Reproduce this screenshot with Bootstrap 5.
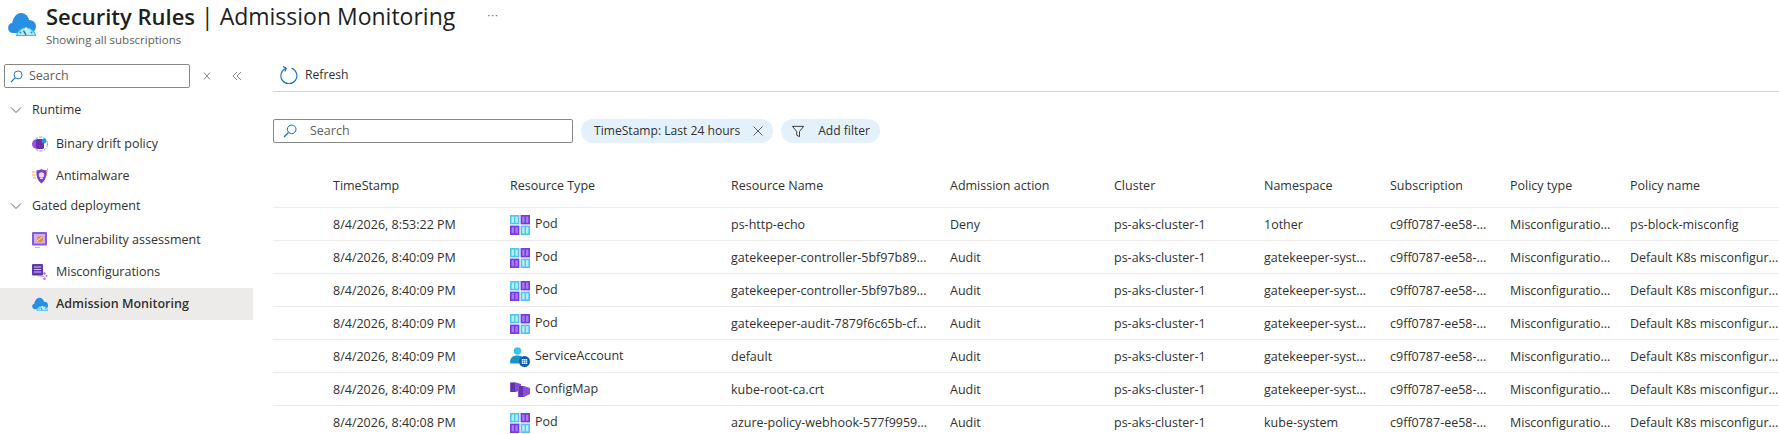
<!DOCTYPE html>
<html lang="en">
<head>
    <meta charset="UTF-8">
    <meta name="viewport" content="width=device-width, initial-scale=1.0">
    <title>Security Rules | Admission Monitoring</title>
    <link href="https://cdn.jsdelivr.net/npm/bootstrap@5.3.3/dist/css/bootstrap.min.css" rel="stylesheet">
    <style>
        body { font-family: "Open Sans", "Liberation Sans", sans-serif; font-size: 12.5px; color: #323130; background: #fff; overflow: hidden; height: 434px; }
        .page-head { height: 55px; padding-left: 8px; }
        .head-text { margin-left: 10px; }
        .page-title { font-size: 23px; line-height: 32px; margin: 0; font-weight: 400; color: #201f1e; white-space: nowrap; }
        .page-title strong { font-weight: 600; font-size: 22px; }
        .page-sub { font-size: 11.5px; line-height: 16px; color: #605e5c; }
        .head-more { margin-left: 32px; line-height: 30px; color: #605e5c; letter-spacing: 1px; font-size: 11px; }
        .logo-mark { margin-top: 12px; }
        .side-pane { width: 253px; flex: none; padding-top: 9px; }
        .side-tools { padding: 0 0 8px 4px; height: 32px; }
        .box-search { border: 1px solid #8a8886; border-radius: 2px; height: 24px; display: flex; align-items: center; background: #fff; }
        .box-search input { border: 0; outline: 0; padding: 0; background: transparent; font-size: 12.5px; width: 100%; color: #323130; }
        .box-search input::placeholder { color: #605e5c; opacity: 1; }
        .side-search { width: 186px; padding-left: 5px; gap: 6px; }
        .tool-x { margin-left: 12px; width: 10px; }
        .tool-back { margin-left: 20px; width: 10px; }
        .group-head { height: 28px; margin-bottom: 4px; padding-left: 10px; gap: 10px; }
        .side-link { height: 32px; padding-left: 32px; gap: 8px; color: #323130; text-decoration: none; }
        .side-link.is-active { background: #edebe9; font-weight: 600; }
        .main-pane { padding-left: 20px; min-width: 0; }
        .tool-bar { height: 37px; border-bottom: 1px solid #d6d4d2; padding: 5px 0 0 7px; gap: 7px; font-size: 12.2px; }
        .refresh-icon { margin-top: -2px; }
        .filter-row { margin-top: 27px; height: 24px; gap: 8px; }
        .filter-search { width: 300px; padding-left: 9px; gap: 13px; }
        .filter-search input { padding-top: 1px; }
        .filter-chip { height: 24px; border-radius: 12px; background: #e5f1fa; color: #323130; white-space: nowrap; padding: 0 10px 0 13px; font-size: 12.1px; }
        .chip-time { width: 192px; justify-content: space-between; }
        .chip-add { width: 99px; padding-left: 11px; gap: 14px; }
        .grid-table { table-layout: fixed; width: 1506px; margin: 17px 0 0; font-size: 12.5px; border-collapse: collapse; }
        .grid-table th, .grid-table td { padding: 3px 0 0; border-bottom: 1px solid #edebe9; white-space: nowrap; overflow: hidden; color: #323130; vertical-align: middle; box-shadow: none; }
        .grid-table th { height: 47px; font-weight: 500; padding-top: 6px; }
        .grid-table td { height: 33px; }
        .type-cell { gap: 5px; margin-top: -1px; }
    </style>
</head>
<body>
    <svg width="0" height="0" class="position-absolute">
        <defs>
            <symbol id="pod" viewBox="0 0 20 20">
                <rect x="0" y="0" width="9.4" height="9.4" fill="#50c7e8"/><rect x="10.6" y="0" width="9.4" height="9.4" fill="#773adc"/>
                <rect x="0" y="10.6" width="9.4" height="9.4" fill="#773adc"/><rect x="10.6" y="10.6" width="9.4" height="9.4" fill="#50c7e8"/>
                <g fill="#b9ecf7"><rect x="1.6" y="1.6" width="2.4" height="6.2"/><rect x="5.4" y="1.6" width="2.4" height="6.2"/><rect x="12.2" y="12.2" width="2.4" height="6.2"/><rect x="16" y="12.2" width="2.4" height="6.2"/></g>
                <g fill="#a67af4"><rect x="12.2" y="1.6" width="2.4" height="6.2"/><rect x="16" y="1.6" width="2.4" height="6.2"/><rect x="1.6" y="12.2" width="2.4" height="6.2"/><rect x="5.4" y="12.2" width="2.4" height="6.2"/></g>
            </symbol>
            <symbol id="account" viewBox="0 0 20 20">
                <circle cx="7.5" cy="4" r="3.800" fill="#3cc4e6"/>
                <path d="M0 15.500c0-4.500 2.600-7 7.500-7 2.600 0 4.600.7 5.800 2-2.400.6-4 2.600-4 5 0 .3 0 .6.1.9H1.200C.4 16.400 0 16.300 0 15.500z" fill="#1b93c7"/>
                <circle cx="14.500" cy="14.500" r="5.500" fill="#0a5fa8"/>
                <path d="M11.800 12.100h5.400v4.800h-5.400z" fill="#fff"/>
                <path d="M11.800 13.700h5.400M11.800 15.300h5.400M13.600 12.100v4.800M15.400 12.100v4.800" stroke="#0a5fa8" stroke-width=".5"/>
            </symbol>
            <symbol id="configmap" viewBox="0 0 20 20">
                <path d="M0 2.500h6l5 1.500v6l-5 2H0z" fill="#8150cf"/>
                <path d="M8 6h6l6 2v6l-6 3H8z" fill="#8a4fd8"/>
                <path d="M2 2.500v9.500M4 2.500v9.500M10 6v11M12 6v11" stroke="#3f1d80" stroke-width="1"/>
            </symbol>
            <symbol id="lens" viewBox="0 0 14 14">
                <circle cx="8.700" cy="5.300" r="4.300" fill="none" stroke="#0f6cbd" stroke-width="1"/>
                <path d="M5.500 8.500 1 13" stroke="#0f6cbd" stroke-width="1.200" fill="none"/>
            </symbol>
            <symbol id="cloud" viewBox="0 0 28 24">
                <path d="M5 21a5 5 0 0 1-.8-9.900C5 5.500 8.500 1 13 1c4.300 0 7.200 3 8 7a6.500 6.500 0 0 1 1 13z" fill="#2a8fe3"/>
                <path d="M8.500 23.500a9.700 9.700 0 0 1 19 0z" fill="#b6ecf7" stroke="#2fc0de" stroke-width="1.200"/>
                <path d="M18 23l-2.500-4.500" stroke="#33658f" stroke-width="1.400"/>
                <circle cx="12.500" cy="20.500" r="1" fill="#2a8fe3"/><circle cx="18" cy="16.500" r="1" fill="#fff"/><circle cx="23.500" cy="20.500" r="1" fill="#2a8fe3"/>
            </symbol>
        </defs>
    </svg>

    <header class="page-head d-flex align-items-start">
        <svg class="logo-mark" width="28" height="24"><use href="#cloud"/></svg>
        <div class="head-text">
            <h1 class="page-title"><strong>Security Rules</strong> | Admission Monitoring</h1>
            <div class="page-sub">Showing all subscriptions</div>
        </div>
        <div class="head-more">···</div>
    </header>

    <div class="d-flex">
        <nav class="side-pane">
            <div class="side-tools d-flex align-items-center">
                <div class="box-search side-search">
                    <svg width="13" height="13" class="flex-shrink-0"><use href="#lens"/></svg>
                    <input type="text" placeholder="Search" aria-label="Search">
                </div>
                <svg class="tool-x" width="10" height="10" viewBox="0 0 10 10"><path d="M2 1.500l6 7M8 1.500l-6 7" stroke="#8a8886" fill="none"/></svg>
                <svg class="tool-back" width="10" height="10" viewBox="0 0 10 10"><path d="M5 1 1 5l4 4M9 1 5 5l4 4" stroke="#8a8886" fill="none"/></svg>
            </div>

            <div class="group-head d-flex align-items-center">
                <svg width="12" height="12" viewBox="0 0 12 12"><path d="M1 3.500l5 5 5-5" stroke="#605e5c" fill="none"/></svg>
                <span>Runtime</span>
            </div>
            <a class="side-link d-flex align-items-center" href="#">
                <svg width="16" height="16" viewBox="0 0 16 16">
                    <circle cx="8.500" cy="8" r="7" fill="none" stroke="#5aa7e6" stroke-width="1" stroke-dasharray="3 1.500"/>
                    <ellipse cx="4" cy="8" rx="4" ry="4.500" fill="#9a52dc"/><rect x="4" y="3" width="8" height="10" rx="1.500" fill="#6b2fb5"/><circle cx="12" cy="5" r="2.400" fill="#2a8fe3"/>
                </svg>
                <span>Binary drift policy</span>
            </a>
            <a class="side-link d-flex align-items-center" href="#">
                <svg width="16" height="16" viewBox="0 0 16 16">
                    <path d="M0 4h3.500M0 7h3.500M1 10h3.500" stroke="#f2a93b" stroke-width="1"/>
                    <path d="M15.500 .5l-1.500 8" stroke="#f2a93b" stroke-width="1.200"/>
                    <path d="M9.500 1c1.800 1.200 3.200 1.300 5 1.300 0 6-1 10.500-5 13.200-4-2.700-5.500-7.200-5-13.200 2 0 3.300-.1 5-1.300z" fill="#7b3fc9"/>
                    <circle cx="9.500" cy="7" r="2.700" fill="#e8dcfb"/><path d="M8 10.500h3" stroke="#e8dcfb"/>
                </svg>
                <span>Antimalware</span>
            </a>

            <div class="group-head d-flex align-items-center">
                <svg width="12" height="12" viewBox="0 0 12 12"><path d="M1 3.500l5 5 5-5" stroke="#605e5c" fill="none"/></svg>
                <span>Gated deployment</span>
            </div>
            <a class="side-link d-flex align-items-center" href="#">
                <svg width="16" height="16" viewBox="0 0 16 16">
                    <rect x="0" y="0" width="15" height="13.500" rx="1" fill="#8a5ad6"/><rect x="2" y="2" width="11" height="9.500" fill="#c9b3ee"/>
                    <circle cx="8" cy="7" r="3" fill="#f08a24"/><path d="M3 15.500h5" stroke="#c9b3ee"/><path d="M5 9l5-4" stroke="#fff" stroke-width=".8"/>
                </svg>
                <span>Vulnerability assessment</span>
            </a>
            <a class="side-link d-flex align-items-center" href="#">
                <svg width="16" height="16" viewBox="0 0 16 16">
                    <rect x="0" y="0" width="11" height="11.500" rx="1" fill="#5c3aa8"/><path d="M2 3h7M2 5.500h7M2 8h7" stroke="#cfc3ee" stroke-width="1"/>
                    <circle cx="12.500" cy="9.500" r="1.300" fill="#a970e8"/><circle cx="14.500" cy="12" r="1" fill="#a970e8"/><circle cx="12.500" cy="14.800" r="1.200" fill="#a970e8"/>
                    <path d="M5 11.500l7 1" stroke="#a970e8" stroke-width=".8"/>
                </svg>
                <span>Misconfigurations</span>
            </a>
            <a class="side-link is-active d-flex align-items-center" href="#">
                <svg width="16" height="14"><use href="#cloud"/></svg>
                <span>Admission Monitoring</span>
            </a>
        </nav>

        <main class="main-pane flex-grow-1">
            <div class="tool-bar d-flex align-items-center">
                <svg class="refresh-icon" width="18" height="19" viewBox="0 0 18 19"><path d="M6 3.300A8 8 0 1 0 11.500 3.200" fill="none" stroke="#0f6cbd" stroke-width="1.100"/><path d="M3 1.500 6.300 3.300 4.800 6.500" fill="none" stroke="#0f6cbd" stroke-width="1.100"/></svg>
                <span>Refresh</span>
            </div>

            <div class="filter-row d-flex">
                <div class="box-search filter-search">
                    <svg width="14" height="14" class="flex-shrink-0"><use href="#lens"/></svg>
                    <input type="text" placeholder="Search" aria-label="Search">
                </div>
                <div class="filter-chip chip-time d-flex align-items-center">
                    <span>TimeStamp: Last 24 hours</span>
                    <svg width="10" height="10" viewBox="0 0 10 10"><path d="M.5.500l9 9M9.500.500l-9 9" stroke="#605e5c" fill="none"/></svg>
                </div>
                <div class="filter-chip chip-add d-flex align-items-center">
                    <svg width="13" height="13" viewBox="0 0 13 13"><path d="M.5 1h12L8 6.500V12L5 10.500v-4z" fill="none" stroke="#323130"/></svg>
                    <span>Add filter</span>
                </div>
            </div>

            <table class="table grid-table">
                <colgroup>
                    <col style="width:60px"><col style="width:177px"><col style="width:221px"><col style="width:219px"><col style="width:164px"><col style="width:150px"><col style="width:126px"><col style="width:120px"><col style="width:120px"><col>
                </colgroup>
                <thead>
                    <tr><th></th><th>TimeStamp</th><th>Resource Type</th><th>Resource Name</th><th>Admission action</th><th>Cluster</th><th>Namespace</th><th>Subscription</th><th>Policy type</th><th>Policy name</th></tr>
                </thead>
                <tbody>
                    <tr><td></td><td>8/4/2026, 8:53:22 PM</td><td><div class="type-cell d-flex align-items-center"><svg width="20" height="20"><use href="#pod"/></svg>Pod</div></td><td>ps-http-echo</td><td>Deny</td><td>ps-aks-cluster-1</td><td>1other</td><td>c9ff0787-ee58-...</td><td>Misconfiguratio...</td><td>ps-block-misconfig</td></tr>
                    <tr><td></td><td>8/4/2026, 8:40:09 PM</td><td><div class="type-cell d-flex align-items-center"><svg width="20" height="20"><use href="#pod"/></svg>Pod</div></td><td>gatekeeper-controller-5bf97b89...</td><td>Audit</td><td>ps-aks-cluster-1</td><td>gatekeeper-syst...</td><td>c9ff0787-ee58-...</td><td>Misconfiguratio...</td><td>Default K8s misconfigur...</td></tr>
                    <tr><td></td><td>8/4/2026, 8:40:09 PM</td><td><div class="type-cell d-flex align-items-center"><svg width="20" height="20"><use href="#pod"/></svg>Pod</div></td><td>gatekeeper-controller-5bf97b89...</td><td>Audit</td><td>ps-aks-cluster-1</td><td>gatekeeper-syst...</td><td>c9ff0787-ee58-...</td><td>Misconfiguratio...</td><td>Default K8s misconfigur...</td></tr>
                    <tr><td></td><td>8/4/2026, 8:40:09 PM</td><td><div class="type-cell d-flex align-items-center"><svg width="20" height="20"><use href="#pod"/></svg>Pod</div></td><td>gatekeeper-audit-7879f6c65b-cf...</td><td>Audit</td><td>ps-aks-cluster-1</td><td>gatekeeper-syst...</td><td>c9ff0787-ee58-...</td><td>Misconfiguratio...</td><td>Default K8s misconfigur...</td></tr>
                    <tr><td></td><td>8/4/2026, 8:40:09 PM</td><td><div class="type-cell d-flex align-items-center"><svg width="20" height="20"><use href="#account"/></svg>ServiceAccount</div></td><td>default</td><td>Audit</td><td>ps-aks-cluster-1</td><td>gatekeeper-syst...</td><td>c9ff0787-ee58-...</td><td>Misconfiguratio...</td><td>Default K8s misconfigur...</td></tr>
                    <tr><td></td><td>8/4/2026, 8:40:09 PM</td><td><div class="type-cell d-flex align-items-center"><svg width="20" height="20"><use href="#configmap"/></svg>ConfigMap</div></td><td>kube-root-ca.crt</td><td>Audit</td><td>ps-aks-cluster-1</td><td>gatekeeper-syst...</td><td>c9ff0787-ee58-...</td><td>Misconfiguratio...</td><td>Default K8s misconfigur...</td></tr>
                    <tr><td></td><td>8/4/2026, 8:40:08 PM</td><td><div class="type-cell d-flex align-items-center"><svg width="20" height="20"><use href="#pod"/></svg>Pod</div></td><td>azure-policy-webhook-577f9959...</td><td>Audit</td><td>ps-aks-cluster-1</td><td>kube-system</td><td>c9ff0787-ee58-...</td><td>Misconfiguratio...</td><td>Default K8s misconfigur...</td></tr>
                </tbody>
            </table>
        </main>
    </div>
    <script src="https://cdn.jsdelivr.net/npm/bootstrap@5.3.3/dist/js/bootstrap.bundle.min.js"></script>
</body>
</html>
